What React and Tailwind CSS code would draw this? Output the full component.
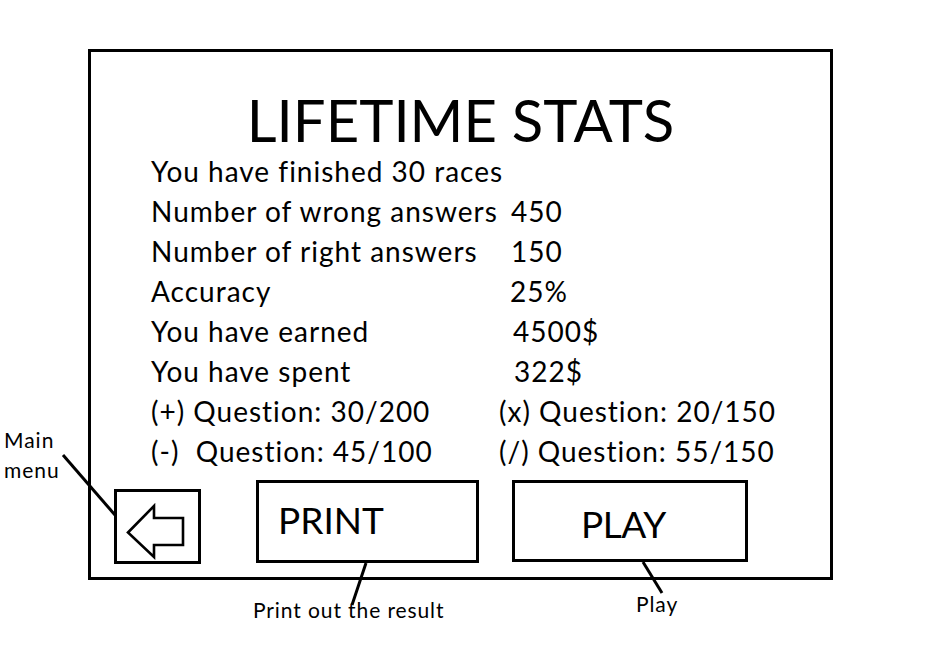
import React from "react";

const stats = [
  { label: "You have finished 30 races", value: "", shift: "" },
  { label: "Number of wrong answers", value: "450", shift: "" },
  { label: "Number of right answers", value: "150", shift: "" },
  { label: "Accuracy", value: "25%", shift: "-ml-px" },
  { label: "You have earned", value: "4500$", shift: "ml-[2px]" },
  { label: "You have spent", value: "322$", shift: "ml-[3px]" },
];

const questions = [
  ["(+) Question: 30/200", "(x) Question: 20/150"],
  ["(-)  Question: 45/100", "(/) Question: 55/150"],
];

function BackArrow() {
  return (
    <svg width="81" height="69" viewBox="0 0 81 69" className="block">
      <polygon
        points="11,40.5 37,14 37,26 66,26 66,53 37,53 37,65"
        fill="none"
        stroke="#000"
        strokeWidth="2.6"
        strokeLinejoin="miter"
      />
    </svg>
  );
}

export default function App() {
  return (
    <div className="relative w-[928px] h-[650px] overflow-hidden bg-white text-black font-['Lato','Liberation_Sans',sans-serif]">
      {/* FRAME */}
      <div className="ml-[88px] mt-[49px] w-[745px] h-[531px] border-[3px] border-black pt-[39px]">
        <h1 className="text-center text-[58px] leading-none font-normal">LIFETIME STATS</h1>

        <div className="mt-[2px] pl-[60px] text-[28px] leading-[40px] tracking-[1px]">
          {stats.map((s, i) => (
            <div key={i} className="grid grid-cols-[360px_auto] whitespace-nowrap">
              <span>{s.label}</span>
              <span className={s.shift}>{s.value}</span>
            </div>
          ))}
          {questions.map((q, i) => (
            <div key={i} className="grid grid-cols-[348px_auto] whitespace-pre">
              <span>{q[0]}</span>
              <span>{q[1]}</span>
            </div>
          ))}
        </div>

        {/* BUTTONS */}
        <div className="flex items-start mt-[9px] pl-[23px]">
          <div className="mt-[9px] w-[87px] h-[75px] border-[3px] border-black">
            <BackArrow />
          </div>
          <div className="ml-[55px] w-[223px] h-[83px] border-[3px] border-black pl-[19px] pt-[18px] text-[37px] leading-none">
            PRINT
          </div>
          <div className="ml-[33px] w-[236px] h-[82px] border-[3px] border-black pl-[66px] pt-[22px] text-[37px] leading-none tracking-[-0.5px]">
            PLAY
          </div>
        </div>
      </div>

      {/* ANNOTATIONS */}
      <svg className="absolute inset-0 pointer-events-none" width="928" height="650">
        <line x1="63" y1="455" x2="115" y2="515" stroke="#000" strokeWidth="3" />
        <line x1="366" y1="563" x2="352" y2="605" stroke="#000" strokeWidth="3" />
        <line x1="643" y1="562" x2="662" y2="593" stroke="#000" strokeWidth="3" />
      </svg>

      <div className="absolute left-[4px] top-[425px] text-[21px] leading-[30px] tracking-[1px]">
        Main
        <br />
        menu
      </div>
      <div className="absolute left-[253px] top-[599px] text-[21px] leading-none tracking-[0.9px] whitespace-nowrap">
        Print out the result
      </div>
      <div className="absolute left-[636px] top-[593px] text-[21px] leading-none tracking-[0.9px]">Play</div>
    </div>
  );
}
